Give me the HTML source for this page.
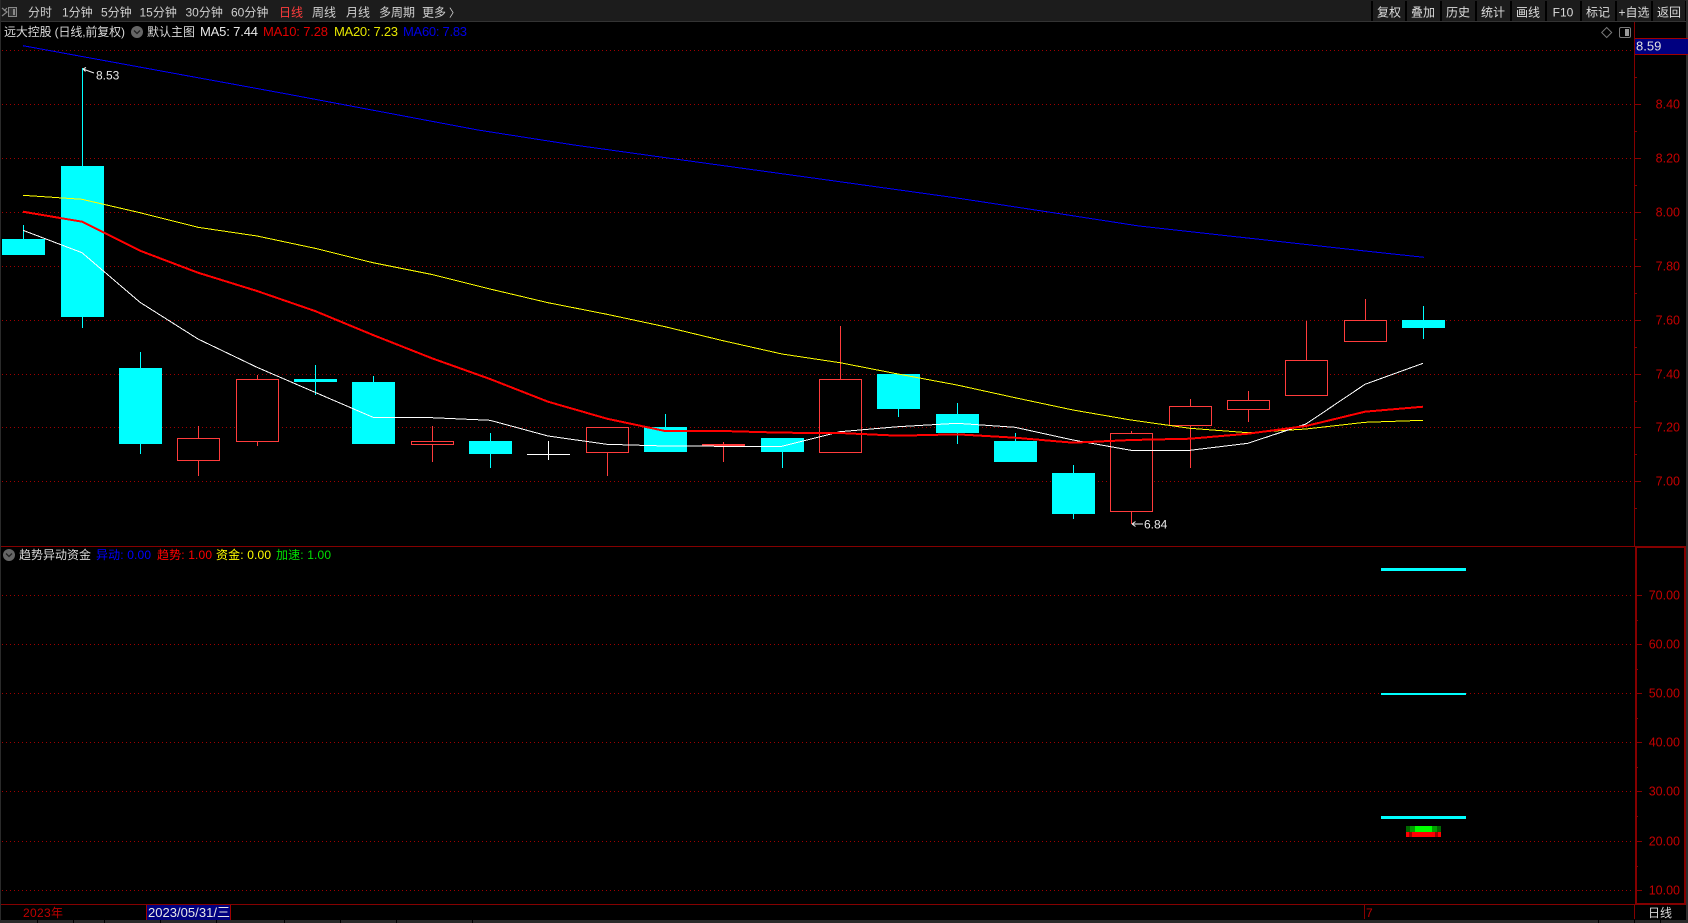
<!DOCTYPE html>
<html><head><meta charset="utf-8"><style>
html,body{margin:0;padding:0;background:#000;width:1688px;height:923px;overflow:hidden}
svg{display:block;position:absolute;left:0;top:0}
text{font-family:"Liberation Sans","Noto Sans CJK SC",sans-serif;font-size:12px;white-space:pre}
.tb{fill:#d0d0d0}.btn{fill:#dcdcdc;text-anchor:middle}
.ax{fill:#c40000;text-anchor:end;font-size:12.5px}
.g{stroke:#a00000;stroke-width:1;stroke-dasharray:1 3;fill:none}
.a{stroke:#850000;stroke-width:1;fill:none}
.c{fill:#0ff}.r{fill:#ff3c3c}
.b{fill:#000;stroke:#ff3c3c;stroke-width:1}
</style></head><body>
<svg width="1688" height="923" viewBox="0 0 1688 923" shape-rendering="crispEdges">
<rect width="1688" height="923" fill="#000"/>
<!-- window chrome -->
<rect x="0" y="0" width="1688" height="21" fill="#1c1c1c"/>
<rect x="0" y="21" width="1688" height="1" fill="#333"/>
<rect x="0" y="0" width="1" height="923" fill="#2a2a2a"/>
<rect x="1686" y="0" width="2" height="923" fill="#2c2c2c"/>
<rect x="0" y="920" width="1688" height="3" fill="#2a2a2a"/>
<g fill="#000"><rect x="37" y="920" width="1" height="3"/><rect x="73" y="920" width="1" height="3"/><rect x="104" y="920" width="1" height="3"/><rect x="160" y="920" width="1" height="3"/><rect x="216" y="920" width="1" height="3"/><rect x="284" y="920" width="1" height="3"/><rect x="340" y="920" width="1" height="3"/><rect x="396" y="920" width="1" height="3"/><rect x="472" y="920" width="1" height="3"/><rect x="1598" y="920" width="1" height="3"/><rect x="1634" y="920" width="1" height="3"/><rect x="1660" y="920" width="1" height="3"/></g>
<!-- toolbar button separators -->
<g fill="#000"><rect x="1371" y="1" width="2" height="20"/><rect x="1405" y="1" width="2" height="20"/><rect x="1440" y="1" width="2" height="20"/><rect x="1475" y="1" width="2" height="20"/><rect x="1510" y="1" width="2" height="20"/><rect x="1545" y="1" width="2" height="20"/><rect x="1580" y="1" width="2" height="20"/><rect x="1615" y="1" width="2" height="20"/><rect x="1651" y="1" width="2" height="20"/><rect x="1685" y="1" width="1" height="20"/></g>
<!-- top left icon -->
<g shape-rendering="auto"><path d="M2 8l5 4-5 4M7 8l-3 3" stroke="#888" stroke-width="1.200" fill="none"/><rect x="8.500" y="7.500" width="8" height="9" fill="#333" stroke="#888"/><rect x="13" y="9" width="2" height="6" fill="#888"/></g>
<!-- grid -->
<g class="g">
<path d="M2 50.500H1634M2 104.500H1634M2 158.500H1634M2 212.500H1634M2 266.500H1634M2 320.500H1634M2 374.500H1634M2 427.500H1634M2 481.500H1634"/>
<path d="M2 595.500H1634M2 644.500H1634M2 693.500H1634M2 742.500H1634M2 791.500H1634M2 841.500H1634M2 890.500H1634"/>
</g>
<!-- cyan candles -->
<g class="c">
<rect x="2" y="239" width="43" height="16"/><rect x="23" y="225" width="1" height="14"/>
<rect x="61" y="166" width="43" height="151"/><rect x="82" y="68" width="1" height="260"/>
<rect x="119" y="368" width="43" height="76"/><rect x="140" y="352" width="1" height="102"/>
<rect x="294" y="379" width="43" height="3"/><rect x="315" y="365" width="1" height="30"/>
<rect x="352" y="382" width="43" height="62"/><rect x="373" y="376" width="1" height="6"/>
<rect x="469" y="441" width="43" height="13"/><rect x="490" y="433" width="1" height="35"/>
<rect x="644" y="427" width="43" height="25"/><rect x="665" y="414" width="1" height="13"/>
<rect x="761" y="438" width="43" height="14"/><rect x="782" y="452" width="1" height="16"/>
<rect x="877" y="374" width="43" height="35"/><rect x="898" y="409" width="1" height="8"/>
<rect x="936" y="414" width="43" height="19"/><rect x="957" y="403" width="1" height="41"/>
<rect x="994" y="441" width="43" height="21"/><rect x="1015" y="433" width="1" height="8"/>
<rect x="1052" y="473" width="43" height="41"/><rect x="1073" y="465" width="1" height="54"/>
<rect x="1402" y="320" width="43" height="8"/><rect x="1423" y="306" width="1" height="33"/>
</g>
<!-- red candles: wicks -->
<g class="r">
<rect x="198" y="426" width="1" height="50"/>
<rect x="257" y="375" width="1" height="71"/>
<rect x="432" y="426" width="1" height="36"/>
<rect x="607" y="452" width="1" height="24"/>
<rect x="723" y="442" width="1" height="20"/>
<rect x="840" y="326" width="1" height="54"/>
<rect x="1131" y="431" width="1" height="93"/>
<rect x="1190" y="399" width="1" height="69"/>
<rect x="1248" y="391" width="1" height="31"/>
<rect x="1306" y="321" width="1" height="40"/>
<rect x="1365" y="299" width="1" height="22"/>
</g>
<g class="b">
<rect x="177.500" y="438.500" width="42" height="22"/>
<rect x="236.500" y="379.500" width="42" height="62"/>
<rect x="411.500" y="441.500" width="42" height="3"/>
<rect x="586.500" y="427.500" width="42" height="25"/>
<rect x="702.500" y="444.500" width="42" height="1"/>
<rect x="819.500" y="379.500" width="42" height="73"/>
<rect x="1110.500" y="433.500" width="42" height="78"/>
<rect x="1169.500" y="406.500" width="42" height="19"/>
<rect x="1227.500" y="400.500" width="42" height="9"/>
<rect x="1285.500" y="360.500" width="42" height="35"/>
<rect x="1344.500" y="320.500" width="42" height="21"/>
</g>
<!-- white doji -->
<rect x="527" y="454" width="43" height="1" fill="#fff"/><rect x="548" y="441" width="1" height="19" fill="#fff"/>
<!-- MA lines -->
<g fill="none">
<polyline stroke="#0000ff" stroke-width="1" points="23,45.700 287,94 478,130 574,145 670,158.300 813,178 957,198 1053,212.700 1139,226 1365,251 1424,257.300"/>
<polyline stroke="#ffff00" stroke-width="1" points="23,195.300 82,199.300 140,212.700 198,227.300 257,236 315,248.300 373,262.700 432,274.500 490,289 548,302.700 607,314.300 665,326.700 723,340.700 782,354 840,362.700 898,374 957,385 1015,397.700 1073,410 1131,420 1190,428.300 1248,432.700 1306,429 1365,422.300 1423,420.300"/>
<polyline stroke="#ffffff" stroke-width="1" points="23,230.300 82,252.700 140,302.300 198,339 257,367.300 315,392.300 373,417.300 432,417.700 490,420.300 548,436 607,444.300 665,446 723,446.300 782,446.300 840,431.700 898,426.700 957,423.300 1015,427.300 1073,440 1131,450.300 1190,450.300 1248,443.300 1306,424 1365,384.300 1423,363.300"/>
<polyline stroke="#ff0000" stroke-width="2" points="23,211.700 82,221.700 140,250.700 198,272.700 257,291 315,311 373,335 432,358.300 490,379 548,401.700 607,418.700 665,431 723,431 782,432.700 840,433 898,435.700 957,434.300 1015,437.700 1073,442.700 1131,440 1190,438.700 1248,433.700 1306,426 1365,411.700 1423,406.700"/>
</g>
<!-- sub chart indicator -->
<rect x="1381" y="568" width="85" height="3" fill="#0ff"/>
<rect x="1381" y="693" width="85" height="2" fill="#0ff"/>
<rect x="1381" y="816" width="85" height="3" fill="#0ff"/>
<g>
<rect x="1406" y="826" width="35" height="6" fill="#006800"/>
<rect x="1410" y="826" width="27" height="6" fill="#00a000"/>
<rect x="1415" y="826" width="17" height="6" fill="#00ff00"/>
<rect x="1406" y="832" width="35" height="5" fill="#ff0000"/>
<rect x="1409" y="832" width="3" height="5" fill="#a00000"/>
<rect x="1435" y="832" width="3" height="5" fill="#a00000"/>
</g>
<!-- frame / axes -->
<g class="a">
<path d="M1634.500 22V546M1 546.500H1684M1 904.500H1686"/>
<path d="M1364.500 905V919M1634.500 905V919"/>
<path d="M1635 104.500h6M1635 158.500h6M1635 212.500h6M1635 266.500h6M1635 320.500h6M1635 374.500h6M1635 427.500h6M1635 481.500h6"/>
<path d="M1635 77.500h2M1635 131.500h2M1635 185.500h2M1635 239.500h2M1635 293.500h2M1635 347.500h2M1635 401.500h2M1635 454.500h2M1635 508.500h2"/>
<path d="M1636 595.500h6M1636 644.500h6M1636 693.500h6M1636 742.500h6M1636 791.500h6M1636 841.500h6M1636 890.500h6"/>
<path d="M1636 620.500h2M1636 669.500h2M1636 718.500h2M1636 767.500h2M1636 816.500h2M1636 866.500h2"/>
</g>
<rect x="1635" y="546" width="51" height="2" fill="#850000"/>
<rect x="1635" y="546" width="2" height="359" fill="#850000"/>
<rect x="1684" y="546" width="2" height="359" fill="#850000"/>
<rect x="1635" y="903" width="51" height="2" fill="#850000"/>
<!-- price tag -->
<rect x="1635" y="38" width="53" height="17" fill="#000080"/>
<rect x="1635" y="38" width="53" height="1" fill="#a00000"/><rect x="1635" y="54" width="53" height="1" fill="#a00000"/>
<!-- date tag -->
<rect x="146" y="905" width="85" height="15" fill="#000080"/>
<rect x="146" y="905" width="1" height="15" fill="#a00000"/><rect x="230" y="905" width="1" height="15" fill="#a00000"/>
<!-- top-right icons -->
<g shape-rendering="auto">
<path d="M1606.700 27.500l5 5-5 5-5-5z" fill="none" stroke="#777" stroke-width="1"/>
<rect x="1619.500" y="27.500" width="11" height="10" rx="1.500" fill="none" stroke="#777"/>
<rect x="1625" y="29" width="4" height="7" fill="#999"/>
<circle cx="137" cy="32" r="6" fill="#666"/><path d="M134 30.500l3 3 3-3" fill="none" stroke="#222" stroke-width="1.300"/>
<circle cx="9" cy="555" r="6" fill="#666"/><path d="M6 553.500l3 3 3-3" fill="none" stroke="#222" stroke-width="1.300"/>
<path d="M83 69l11 4M83 69l3 -1.500M83 69l2.500 2.500" stroke="#eee" stroke-width="1" fill="none"/>
<path d="M1132 524h11M1132 524l3.500 -2.500M1132 524l3.500 2.500" stroke="#eee" stroke-width="1" fill="none"/>
</g>
<!-- toolbar text -->
<g class="tb" shape-rendering="auto">
<text x="28" y="16.500">分时</text>
<text x="62" y="16.500">1分钟</text>
<text x="101" y="16.500">5分钟</text>
<text x="139.500" y="16.500">15分钟</text>
<text x="185.500" y="16.500">30分钟</text>
<text x="231" y="16.500">60分钟</text>
<text x="279" y="16.500" style="fill:#ff3c3c">日线</text>
<text x="312" y="16.500">周线</text>
<text x="346" y="16.500">月线</text>
<text x="379" y="16.500">多周期</text>
<text x="422" y="16.500">更多</text>
<text x="449" y="16.500" style="font-size:11px">〉</text>
</g>
<g class="btn">
<text x="1389" y="16.500">复权</text>
<text x="1423" y="16.500">叠加</text>
<text x="1458" y="16.500">历史</text>
<text x="1493" y="16.500">统计</text>
<text x="1528" y="16.500">画线</text>
<text x="1563" y="16.500">F10</text>
<text x="1598" y="16.500">标记</text>
<text x="1634" y="16.500">+自选</text>
<text x="1669" y="16.500">返回</text>
</g>
<!-- legends -->
<text x="4" y="36" fill="#d8d8d8" textLength="121">远大控股 (日线,前复权)</text>
<text x="147" y="36" fill="#d8d8d8">默认主图</text>
<text x="200" y="36" fill="#e8e8e8" textLength="58" style="font-size:13px">MA5: 7.44</text>
<text x="263" y="36" fill="#e00000" textLength="65" style="font-size:13px">MA10: 7.28</text>
<text x="334" y="36" fill="#e6e600" textLength="64" style="font-size:13px">MA20: 7.23</text>
<text x="403" y="36" fill="#0000e6" textLength="64" style="font-size:13px">MA60: 7.83</text>
<text x="19" y="559" fill="#d8d8d8">趋势异动资金</text>
<text x="96" y="559" fill="#0000ff" textLength="55">异动: 0.00</text>
<text x="157" y="559" fill="#ff0000" textLength="55">趋势: 1.00</text>
<text x="216" y="559" fill="#ffff00" textLength="55">资金: 0.00</text>
<text x="276" y="559" fill="#00e000" textLength="55">加速: 1.00</text>
<text x="96" y="79.500" fill="#e8e8e8">8.53</text>
<text x="1144" y="528.500" fill="#e8e8e8">6.84</text>
<text x="1636" y="50.500" fill="#e0e0e0" style="font-size:13px">8.59</text>
<!-- axis labels -->
<text class="ax" x="1680" y="108.500">8.40</text>
<text class="ax" x="1680" y="162.500">8.20</text>
<text class="ax" x="1680" y="216.500">8.00</text>
<text class="ax" x="1680" y="270.500">7.80</text>
<text class="ax" x="1680" y="324.500">7.60</text>
<text class="ax" x="1680" y="378.500">7.40</text>
<text class="ax" x="1680" y="431.500">7.20</text>
<text class="ax" x="1680" y="485.500">7.00</text>
<text class="ax" x="1680" y="599.500">70.00</text>
<text class="ax" x="1680" y="648.500">60.00</text>
<text class="ax" x="1680" y="697.500">50.00</text>
<text class="ax" x="1680" y="746.500">40.00</text>
<text class="ax" x="1680" y="795.500">30.00</text>
<text class="ax" x="1680" y="845.500">20.00</text>
<text class="ax" x="1680" y="894.500">10.00</text>
<!-- bottom row -->
<text x="23" y="917" fill="#c00000" textLength="40">2023年</text>
<text x="148" y="917" fill="#e8e8e8" textLength="82" style="font-size:13px">2023/05/31/三</text>
<text x="1366" y="917" fill="#c00000">7</text>
<text x="1648" y="917" fill="#d8d8d8">日线</text>
</svg>
</body></html>
